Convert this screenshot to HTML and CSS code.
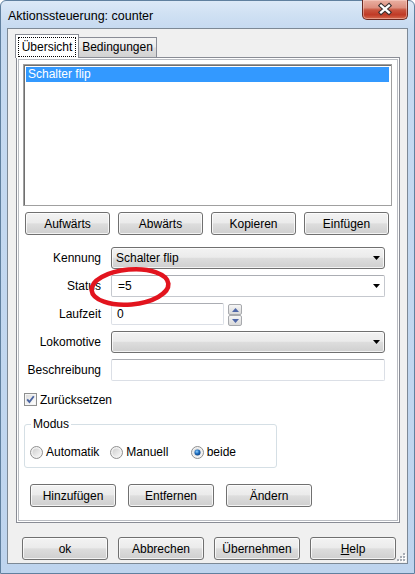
FILE: index.html
```html
<!DOCTYPE html>
<html lang="de">
<head>
<meta charset="utf-8">
<title>Aktionssteuerung: counter</title>
<link rel="stylesheet" href="styles.css">
</head>
<body>
<div class="window">
  <div class="titlebar">
    <span class="title">Aktionssteuerung: counter</span>
    <div class="close">
      <svg width="45" height="19" viewBox="0 0 45 19">
        <path d="M18.5 5.5 L26.5 12.5 M26.5 5.5 L18.5 12.5" stroke="#3a3030" stroke-width="4.6" stroke-linecap="square" fill="none"/>
        <path d="M18.5 5.5 L26.5 12.5 M26.5 5.5 L18.5 12.5" stroke="#ffffff" stroke-width="2.4" stroke-linecap="square" fill="none"/>
      </svg>
    </div>
  </div>
  <div class="client">
    <div class="tabs">
      <div class="tab active"><span class="focus">Übersicht</span></div>
      <div class="tab">Bedingungen</div>
    </div>
    <div class="panel">
      <div class="listbox">
        <div class="item selected">Schalter flip</div>
      </div>
      <div class="btnrow row1">
        <div class="btn w85">Aufwärts</div>
        <div class="btn w85">Abwärts</div>
        <div class="btn w85">Kopieren</div>
        <div class="btn w85">Einfügen</div>
      </div>
      <div class="form">
        <div class="label">Kennung</div>
        <div class="combo ro"><span class="val">Schalter flip</span><svg class="arrow" width="7" height="4" viewBox="0 0 7 4"><polygon points="0,0 7,0 3.5,4" fill="#000"/></svg></div>
        <div class="label">Status</div>
        <div class="combo edit"><span class="val">=5</span><svg class="arrow" width="7" height="4" viewBox="0 0 7 4"><polygon points="0,0 7,0 3.5,4" fill="#000"/></svg></div>
        <div class="label">Laufzeit</div>
        <div class="spinrow">
          <div class="field short"><span class="val">0</span></div>
          <div class="spin">
            <div class="spinbtn"><svg width="7" height="4" viewBox="0 0 7 4"><polygon points="0,4 7,4 3.5,0" fill="#4f67a8"/></svg></div>
            <div class="spinbtn"><svg width="7" height="4" viewBox="0 0 7 4"><polygon points="0,0 7,0 3.5,4" fill="#4f67a8"/></svg></div>
          </div>
        </div>
        <div class="label">Lokomotive</div>
        <div class="combo ro"><span class="val"></span><svg class="arrow" width="7" height="4" viewBox="0 0 7 4"><polygon points="0,0 7,0 3.5,4" fill="#000"/></svg></div>
        <div class="label">Beschreibung</div>
        <div class="field"></div>
      </div>
      <div class="check">
        <svg width="13" height="13" viewBox="0 0 13 13">
          <defs>
            <linearGradient id="cbg" x1="0" y1="0" x2="1" y2="1">
              <stop offset="0" stop-color="#dcdcdc"/>
              <stop offset="1" stop-color="#ffffff"/>
            </linearGradient>
          </defs>
          <rect x="0.5" y="0.5" width="12" height="12" fill="#f5f5f5" stroke="#8e8f8f"/>
          <rect x="2" y="2" width="9" height="9" fill="url(#cbg)"/>
          <path d="M3.2 6.4 L5.4 9 L9.8 3.2" stroke="#4a64a0" stroke-width="1.9" fill="none"/>
        </svg>
        <span>Zurücksetzen</span>
      </div>
      <fieldset class="group">
        <legend>Modus</legend>
        <div class="radios">
          <div class="radio">
            <svg width="13" height="13" viewBox="0 0 13 13">
              <defs>
                <linearGradient id="rg" x1="0" y1="0" x2="1" y2="1">
                  <stop offset="0" stop-color="#cfcfcf"/>
                  <stop offset="1" stop-color="#f7f7f7"/>
                </linearGradient>
              </defs>
              <circle cx="6.5" cy="6.5" r="6" fill="#f2f2f2" stroke="#8f8f8f"/>
              <circle cx="6.5" cy="6.5" r="4" fill="url(#rg)"/>
            </svg>
            <span>Automatik</span>
          </div>
          <div class="radio">
            <svg width="13" height="13" viewBox="0 0 13 13">
              <circle cx="6.5" cy="6.5" r="6" fill="#f2f2f2" stroke="#8f8f8f"/>
              <circle cx="6.5" cy="6.5" r="4" fill="url(#rg)"/>
            </svg>
            <span>Manuell</span>
          </div>
          <div class="radio">
            <svg width="13" height="13" viewBox="0 0 13 13">
              <defs>
                <radialGradient id="dot" cx="0.4" cy="0.35" r="0.7">
                  <stop offset="0" stop-color="#8fd0ff"/>
                  <stop offset="0.5" stop-color="#1f6fc0"/>
                  <stop offset="1" stop-color="#0c3f80"/>
                </radialGradient>
              </defs>
              <circle cx="6.5" cy="6.5" r="6" fill="#f2f2f2" stroke="#8f8f8f"/>
              <circle cx="6.5" cy="6.5" r="4" fill="url(#rg)"/>
              <circle cx="6.5" cy="6.5" r="3" fill="url(#dot)"/>
            </svg>
            <span>beide</span>
          </div>
        </div>
      </fieldset>
      <div class="btnrow row2">
        <div class="btn w86">Hinzufügen</div>
        <div class="btn w86">Entfernen</div>
        <div class="btn w86">Ändern</div>
      </div>
      <svg class="ellipse" width="90" height="48" viewBox="0 0 90 48">
        <ellipse cx="45" cy="24" rx="38.5" ry="17.5" transform="rotate(-5 45 24)" fill="none" stroke="#e2141e" stroke-width="4.6"/>
      </svg>
    </div>
    <div class="dlgbtns">
      <div class="btn w86">ok</div>
      <div class="btn w86">Abbrechen</div>
      <div class="btn w86">Übernehmen</div>
      <div class="btn w86"><span><u>H</u>elp</span></div>
    </div>
    <svg class="grip" width="10" height="10" viewBox="0 0 10 10">
      <g fill="#ffffff">
        <rect x="8" y="2" width="2" height="2"/><rect x="5" y="5" width="2" height="2"/><rect x="8" y="5" width="2" height="2"/>
        <rect x="2" y="8" width="2" height="2"/><rect x="5" y="8" width="2" height="2"/><rect x="8" y="8" width="2" height="2"/>
      </g>
      <g fill="#a8adb5">
        <rect x="7" y="1" width="2" height="2"/><rect x="4" y="4" width="2" height="2"/><rect x="7" y="4" width="2" height="2"/>
        <rect x="1" y="7" width="2" height="2"/><rect x="4" y="7" width="2" height="2"/><rect x="7" y="7" width="2" height="2"/>
      </g>
    </svg>
  </div>
</div>
</body>
</html>
```

FILE: styles.css
```css
* { box-sizing: border-box; }
html, body { margin: 0; padding: 0; }
body {
  width: 415px;
  height: 574px;
  overflow: hidden;
  background: #ffffff;
  font: 12px "Liberation Sans", Arial, sans-serif;
  color: #000;
}

.window {
  width: 415px;
  height: 574px;
  display: flex;
  flex-direction: column;
  border: 1px solid #60809f;
  border-radius: 6px 6px 0 0;
  background: linear-gradient(180deg, #dce9f7 0px, #cfe0f3 14px, #c6daf1 28px, #bed4ee 100%);
}

.titlebar {
  height: 27px;
  display: flex;
  align-items: flex-start;
  flex-shrink: 0;
}
.title {
  margin-left: 7px;
  margin-top: 8px;
  font-size: 12.5px;
  line-height: 14px;
  color: #000;
}
.close {
  margin-left: auto;
  margin-right: 6px;
  margin-top: -1px;
  width: 46px;
  height: 20px;
  border: 1px solid #6a2a22;
  border-top: none;
  border-radius: 0 0 5px 5px;
  background: linear-gradient(180deg, #eab0a2 0%, #dd8f7f 40%, #c9553f 52%, #c03a26 78%, #d56a4f 100%);
  box-shadow: inset 0 0 0 1px rgba(255, 220, 210, 0.45);
  display: flex;
}
.close svg { display: block; }

.client {
  position: relative;
  margin: 0 6px;
  height: 536px;
  flex-shrink: 0;
  border: 1px solid #7d8996;
  background: #f0f0f0;
  display: flex;
  flex-direction: column;
}

.tabs {
  position: relative;
  z-index: 1;
  height: 28px;
  display: flex;
  align-items: flex-end;
  padding-left: 7px;
  flex-shrink: 0;
}
.tab {
  border: 1px solid #898c95;
  border-bottom: none;
  text-align: center;
}
.tab.active {
  width: 64px;
  height: 24px;
  margin-bottom: -1px;
  background: #ffffff;
  padding: 2px 2px 0;
}
.tab.active .focus {
  display: block;
  height: 20px;
  line-height: 18px;
  border: 1px dotted #000;
}
.tab:not(.active) {
  width: 78px;
  height: 20px;
  line-height: 19px;
  border-left: none;
  background: linear-gradient(180deg, #f3f3f3 0%, #ebebeb 48%, #dedede 52%, #d2d2d2 100%);
}

.panel {
  position: relative;
  margin-left: 8px;
  width: 384px;
  height: 466px;
  flex-shrink: 0;
  border: 1px solid #898c95;
  background: #ffffff;
  box-shadow: inset 0 0 0 1px #ffffff, inset 0 0 0 2px #b9bcc2;
  display: flex;
  flex-direction: column;
  align-items: flex-start;
}

.listbox {
  margin: 6px 0 0 6px;
  width: 369px;
  height: 142px;
  border: 1px solid #a0a0a0;
  box-shadow: inset 1px 1px 0 #6f6f6f;
  padding: 2px;
  background: #ffffff;
}
.item {
  height: 15px;
  line-height: 15px;
  padding-left: 2px;
}
.item.selected {
  background: #3399ff;
  color: #ffffff;
}

.btnrow { display: flex; }
.row1 { margin: 6px 0 0 8px; gap: 8px; }
.row2 { margin: 16px 0 0 13px; gap: 12px; }

.btn {
  height: 23px;
  border: 1px solid #707070;
  border-radius: 3px;
  background: linear-gradient(180deg, #f3f3f3 0%, #ebebeb 46%, #dddddd 52%, #cfcfcf 100%);
  box-shadow: inset 0 0 0 1px rgba(255, 255, 255, 0.75);
  display: flex;
  align-items: center;
  justify-content: center;
  line-height: 14px;
  color: #000;
}
.w85 { width: 85px; }
.w86 { width: 86px; }

.form {
  margin: 12px 0 0 6px;
  display: grid;
  grid-template-columns: 78px 274px;
  grid-auto-rows: 22px;
  column-gap: 10px;
  row-gap: 6px;
}
.label {
  text-align: right;
  line-height: 22px;
}

.combo {
  display: flex;
  align-items: center;
  height: 22px;
  padding: 0 4px 0 4px;
}
.combo .val { flex: 1; line-height: 14px; }
.combo .arrow { margin-right: 0; display: block; }
.combo.ro {
  border: 1px solid #707070;
  border-radius: 3px;
  background: linear-gradient(180deg, #f3f3f3 0%, #ebebeb 46%, #dddddd 52%, #cfcfcf 100%);
  box-shadow: inset 0 0 0 1px rgba(255, 255, 255, 0.75);
}
.combo.edit {
  border: 1px solid #c5c8ce;
  border-top-color: #abadb3;
  border-radius: 2px;
  background: #ffffff;
  padding-left: 6px;
}

.field {
  height: 22px;
  border: 1px solid #dbdfe6;
  border-top-color: #abadb3;
  border-radius: 2px;
  background: #ffffff;
  display: flex;
  align-items: center;
  padding-left: 5px;
}
.field.short { width: 113px; }
.spinrow {
  display: flex;
  gap: 4px;
  align-items: flex-start;
}
.spin {
  display: flex;
  flex-direction: column;
  width: 14px;
  margin-top: 1px;
}
.spinbtn {
  height: 11px;
  border: 1px solid #a7a9ad;
  border-radius: 2px;
  background: linear-gradient(180deg, #f6f6f6 0%, #e6e6e6 50%, #d9d9d9 100%);
  display: flex;
  align-items: center;
  justify-content: center;
}
.spinbtn svg { display: block; }

.check {
  margin: 12px 0 0 7px;
  display: flex;
  align-items: center;
  gap: 3px;
  height: 13px;
  line-height: 14px;
}
.check svg { display: block; }

.group {
  margin: 11px 0 0 7px;
  width: 253px;
  padding: 13px 5px 7px 5px;
  border: 1px solid #d5dfe5;
  border-radius: 3px;
  min-width: 0;
}
.group legend {
  margin-left: 1px;
  padding: 0 2px;
  line-height: 14px;
  font-size: 12px;
}
.radios {
  display: flex;
  height: 16px;
}
.radio {
  width: 82px;
  display: flex;
  align-items: center;
  gap: 3px;
  line-height: 14px;
}
.radio svg { display: block; flex-shrink: 0; }

.ellipse {
  position: absolute;
  left: 68px;
  top: 205px;
}

.dlgbtns {
  display: flex;
  gap: 10px;
  margin-top: 14px;
  padding-left: 14px;
}

.grip {
  position: absolute;
  right: 1px;
  bottom: 1px;
}
```
